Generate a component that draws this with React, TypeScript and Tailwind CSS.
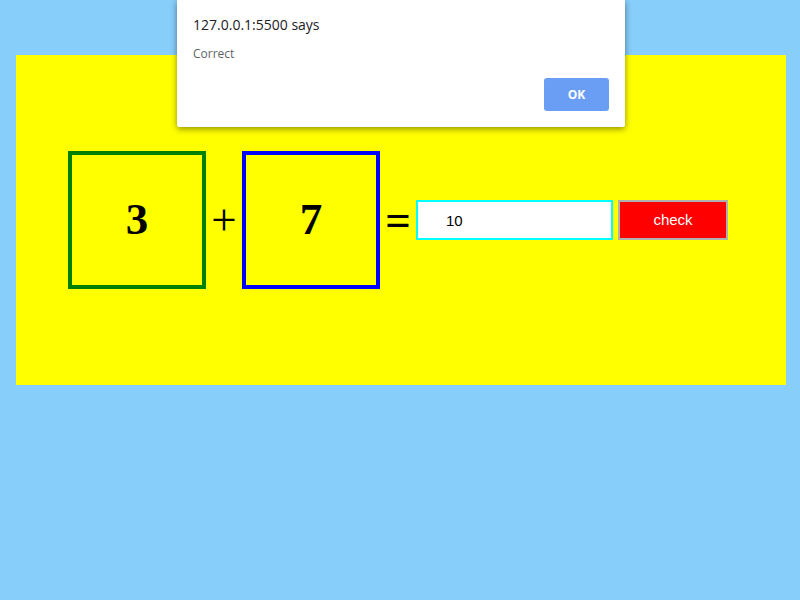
import React from "react";

export default function App() {
  return (
    <div className="relative min-h-[600px] w-[800px] bg-[#87cefa] pt-[55px] px-4 pb-4">
      {/* quiz panel */}
      <div className="h-[330px] w-[770px] bg-[#ffff00] pt-[96px] pl-[52px]">
        <div className="flex items-center">
          <div className="flex h-[138px] w-[138px] items-center justify-center border-4 border-[#008000] font-['Liberation_Serif',serif] text-[45px] font-bold text-black">
            3
          </div>
          <span className="w-[36px] text-center font-['Liberation_Serif',serif] text-[45px] leading-none text-black">+</span>
          <div className="flex h-[138px] w-[138px] items-center justify-center border-4 border-[#0000ff] font-['Liberation_Serif',serif] text-[45px] font-bold text-black">
            7
          </div>
          <span className="w-[36px] text-center font-['Liberation_Serif',serif] text-[45px] font-bold leading-none text-black">=</span>
          <input
            defaultValue="10"
            className="h-[40px] w-[197px] border-2 border-[#00ffff] bg-white pl-[28px] font-['Liberation_Sans',sans-serif] text-[15px] text-black outline-none"
          />
          <button className="ml-[5px] h-[40px] w-[110px] border-2 border-[#b0b0b0] bg-[#ff0000] font-['Liberation_Sans',sans-serif] text-[15px] text-white">
            check
          </button>
        </div>
      </div>

      {/* alert dialog */}
      <div className="absolute left-[177px] top-0 h-[127px] w-[448px] rounded-b-[2px] bg-white px-4 pt-[15px] font-['Open_Sans',sans-serif] shadow-[0_2px_6px_rgba(0,0,0,0.45)]">
        <p className="text-[14px] leading-[20px] text-[#202124]">127.0.0.1:5500 says</p>
        <p className="mt-[11px] text-[12px] leading-[16px] text-[#5f6368]">Correct</p>
        <div className="mt-[16px] flex justify-end">
          <button className="h-[33px] w-[65px] rounded-[3px] bg-[#6a9ef5] text-[12px] font-bold text-white">
            OK
          </button>
        </div>
      </div>
    </div>
  );
}
